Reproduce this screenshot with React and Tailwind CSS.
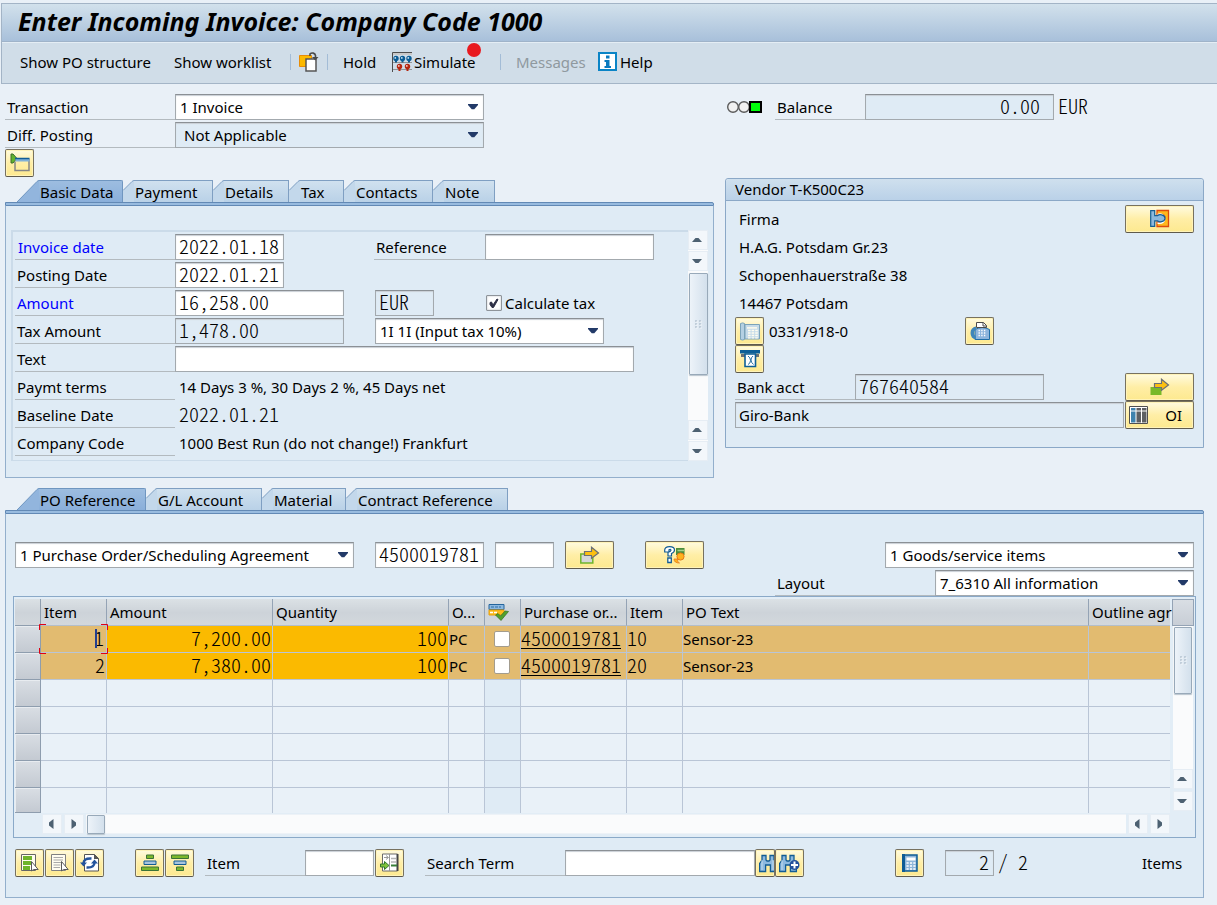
import React from "react";

const MONO = "font-['Noto_Sans_CJK_JP','Liberation_Mono',monospace] font-light text-[20px] [font-feature-settings:'hwid']";
const BOX =
  "h-[26px] rounded-none border border-[#a3a9ae] border-t-[#8b9095] shadow-[inset_0_1px_1px_#c9cfd5] outline-none";
const LABEL = "flex h-[26px] shrink-0 items-center border-b border-[#b3babf] whitespace-nowrap";

function Label({ htmlFor, className = "", children }) {
  return (
    <label htmlFor={htmlFor} className={`${LABEL} ${className}`}>
      {children}
    </label>
  );
}

function Field({ id, label, value = "", readOnly = false, mono = true, className = "" }) {
  return (
    <input
      id={id}
      aria-label={label}
      defaultValue={value}
      readOnly={readOnly}
      className={`${BOX} ${mono ? `pb-[3px] leading-none ${MONO}` : ""} ${readOnly ? "bg-[#dfebf5]" : "bg-white"} ${
        className.includes("pr-") ? "pl-[3px]" : "px-[3px]"
      } ${className}`}
    />
  );
}

function Select({ id, label, value, muted = false, className = "" }) {
  return (
    <div className={`relative shrink-0 ${className}`}>
      <select
        id={id}
        aria-label={label}
        className={`${BOX} block w-full appearance-none pr-6 leading-6 ${muted ? "bg-[#dfebf5] pl-2" : "bg-white pl-1"}`}
      >
        <option>{value}</option>
      </select>
      <svg className="pointer-events-none absolute top-[10px] right-[6px]" width="10" height="6" viewBox="0 0 10 6">
        <path d="M0 0h10v1L6.300 5.300H3.700L0 1z" fill="#223a68" />
      </svg>
    </div>
  );
}

function YellowButton({ label, className = "w-[29px]", align = "justify-center", children }) {
  return (
    <button
      type="button"
      aria-label={label}
      className={`flex h-7 shrink-0 items-center overflow-hidden rounded-[2px] border border-[#77715f] border-b-[#5f5a4c] bg-linear-to-b from-[#fffbe0] via-[#ffeea6] to-[#fde98f] shadow-[inset_0_0_0_1px_#fff3b8] ${align} ${className}`}
    >
      {children}
    </button>
  );
}

function Icon({ children, w = 20, h = 20 }) {
  return (
    <svg width={w} height={h} viewBox={`0 0 ${w} ${h}`} className="shrink-0" aria-hidden="true">
      {children}
    </svg>
  );
}

/* ---------- icons ---------- */

const OtherDocIcon = () => (
  <Icon>
    <path d="M0.500 3.500h12v11h-12z" fill="#fcb900" stroke="#e78c07" />
    <path d="M7 7h10v12H7z" fill="#fff" stroke="#555" strokeWidth="1.500" />
    <path d="M11 4V1.800c2-1.600 5-.8 5.500 1.700V6" fill="none" stroke="#4a4a4a" strokeWidth="1.600" />
    <path d="M13 5h6.500L16.200 8.500z" fill="#4a4a4a" />
  </Icon>
);

const SimulateIcon = () => (
  <Icon w={20} h={20}>
    <path d="M1 0h19v3H1z" fill="#c9c9c9" />
    <path d="M0.500 20V0.500H20" fill="none" stroke="#4d4d4d" />
    {[4, 10.500, 17].map((x) => (
      <g key={x} fill="#0a5c94">
        <circle cx={x} cy="6.500" r="2.700" />
        <path d={`M${x - 1} 8h2v3h-2z`} />
        <circle cx={x - 0.700} cy="5.900" r="0.900" fill="#cfe4f3" />
      </g>
    ))}
    <path d="M1 10.500h19M1 17.500h19" stroke="#777" strokeWidth="0.700" />
    {[7.500, 15.500].map((x) => (
      <g key={x} fill="#b5260f">
        <circle cx={x} cy="14.500" r="2.700" />
        <path d={`M${x - 1} 16h2v3h-2z`} />
        <circle cx={x - 0.700} cy="13.900" r="0.900" fill="#f7d5cd" />
      </g>
    ))}
  </Icon>
);

const InfoIcon = () => (
  <Icon w={19} h={19}>
    <path d="M1 1h17v17H1z" fill="#fff" stroke="#0a84c6" strokeWidth="2" />
    <path d="M8 3.500h3.500v3H8zM6.500 8h5v6H13v2H6.500v-2H8v-4H6.500z" fill="#0a7abf" />
  </Icon>
);

const ExpandIcon = () => (
  <Icon w={20} h={20}>
    <path d="M1 1h2l4 4.500L3 10H1z" fill="#62b32e" stroke="#3d6f2b" />
    <path d="M5 8.500v9h14V6" fill="none" stroke="#868686" strokeWidth="1.500" />
    <path d="M5.500 5.500h14v3h-14z" fill="#7fb0d8" />
    <path d="M5 5.500h14.500" stroke="#125c96" strokeWidth="1.500" />
  </Icon>
);

const LightsIcon = () => (
  <Icon w={36} h={14}>
    <circle cx="7" cy="7" r="5.300" fill="#f1f1f1" stroke="#5a5a5a" strokeWidth="1.400" />
    <circle cx="18" cy="7" r="5.300" fill="#f1f1f1" stroke="#5a5a5a" strokeWidth="1.400" />
    <path d="M24 2h11v10H24z" fill="#00ff0a" stroke="#000" strokeWidth="2" />
  </Icon>
);

const PlugIcon = () => (
  <Icon>
    <path d="M7 1.500h11.500v16H7V13h5c4-1 4-7 0-7.500H7z" fill="#ffb81c" stroke="#dd4a0d" strokeWidth="1.300" />
    <path d="M7.500 5.500c8.500-3 10.500 10.500 0 8.500" fill="none" stroke="#fff" strokeWidth="1.500" />
    <path
      d="M0.700 1.700h4v5h3c1-1.500 7-1.700 7.300 2.600-.3 4.200-6.300 4-7.300 2.500h-3v5.500h-4z"
      fill="#8cb8dc"
      stroke="#155f94"
      strokeWidth="1.200"
    />
  </Icon>
);

const PhoneIcon = () => (
  <Icon w={20} h={19}>
    <path d="M5 2.500h14.500V17H5z" fill="#c6dbe9" stroke="#7ba3b9" />
    <path d="M0.500 1.500Q3 .3 4.500 1.500v16q-2 1-4 0z" fill="#b4d0e2" stroke="#7ba3b9" />
    <path d="M7 5h10v1.800H7z" fill="#f7f7ec" />
    <path d="M8 8.500h10M8 11h10M8 13.500h10M8 15.800h10" stroke="#fffdf0" strokeWidth="1.300" strokeDasharray="2.600 1" />
  </Icon>
);

const FaxIcon = () => (
  <Icon w={20} h={20}>
    <path d="M5 8.500q7-4 14.500 0v10H5z" fill="#8eb5dd" stroke="#1f6ea8" />
    <path d="M6.500 6.500V1.500h7l3 3v2z" fill="#fff" stroke="#4b4b4b" />
    <path d="M13 1.500v3.500h3.500" fill="none" stroke="#4b4b4b" />
    <path d="M6 5.500q-5.500 1-5.500 6.500t5.500 6.500V15q-2-.3-2-3t2-3z" fill="#3f86ba" />
    <path d="M8.500 9.500h7M8.500 12h7M8.500 14.500h7" stroke="#fff" strokeWidth="1.300" strokeDasharray="1.400 1.300" />
  </Icon>
);

const AtmIcon = () => (
  <Icon w={20} h={18}>
    <path d="M0 0h20v3.500H0z" fill="#0d5f97" />
    <path d="M1 4h18v3H1z" fill="#6d7072" />
    <path d="M5 4h10.500v12.500H5z" fill="#fff" stroke="#0d5f97" strokeWidth="1.600" />
    <path d="M8 6q2.500 1.500 2.500 4.500T8 14.500M13 6q-2 1.500-2 4t2.500 4.500" fill="none" stroke="#0d5f97" strokeWidth="0.900" />
  </Icon>
);

const Arrow = () => (
  <path
    d="M4.500 9.500V5.500h7V1.200l7 5.800-7 5.300V9.500z"
    fill="#fdc010"
    stroke="#6b6f76"
    strokeWidth="1.200"
  />
);

const GreenArrowIcon = () => (
  <Icon w={20} h={18}>
    <path d="M0.500 9h11v8h-11z" fill="#79b928" />
    <Arrow />
  </Icon>
);

const CopyArrowIcon = () => (
  <Icon w={20} h={18}>
    <path d="M0.800 8h12v9h-12z" fill="#d5d7d8" stroke="#6fb52c" strokeWidth="1.500" />
    <Arrow />
  </Icon>
);

const ColumnsIcon = () => (
  <Icon w={19} h={19}>
    <path d="M0.500 0.500h18v17h-18z" fill="#fff" stroke="#505050" />
    <path d="M2 2h4.500v14.500H2z" fill="#3e83ae" />
    <path d="M7.500 2h4.500v14.500H7.500zM13 2h4.500v14.500H13z" fill="#5d6063" />
    <path d="M2 5h16" stroke="#fff" />
  </Icon>
);

const HelpMoneyIcon = () => (
  <Icon w={22} h={18}>
    <path d="M12 2h8.500v7H12z" fill="#4b8d3b" />
    <path d="M13.500 4.500H20" stroke="#a6d08b" strokeWidth="1.500" />
    <circle cx="16.500" cy="10.500" r="3.600" fill="#ffb21d" stroke="#e5791a" />
    <path d="M10 13q0 4 5.500 4-2.500-1-2-4z" fill="#ffb21d" stroke="#e5791a" strokeWidth="0.800" />
    <path
      d="M0.700 6V4Q1 .7 5.500.7q5 0 5 3.300 0 2.200-3 3.500V10H4V6.500q3-1 3-2.300-.5-1.500-2-.5V6z"
      fill="#fff"
      stroke="#125c94"
      strokeWidth="1.200"
    />
    <path d="M3.800 12h3.500v4.500H3.800z" fill="#fff" stroke="#125c94" strokeWidth="1.300" />
  </Icon>
);

const FlagCheckIcon = () => (
  <Icon w={21} h={18}>
    <path d="M1 1.500h15v5H1z" fill="#8bb8e0" stroke="#24659c" />
    <path d="M3 4h10" stroke="#2f6fa6" strokeDasharray="3 1" />
    <path d="M1 7h15v5H1z" fill="#fcbc1b" stroke="#e8a00c" />
    <path d="M2 9.500h8" stroke="#fff" strokeWidth="1.300" strokeDasharray="3 1" />
    <path d="M7.500 12l2.500-1.500 2.500 2.500 4.500-5 3.500.5-7.500 9z" fill="#52a12c" stroke="#336f24" strokeWidth="0.700" />
  </Icon>
);

const Cursor = () => (
  <path d="M11.500 8.500v9.500l2-1.500h4.700z" fill="#fff" stroke="#5a5a5a" />
);

const SelectAllIcon = () => (
  <Icon>
    <path d="M1.500 1.500h14v16h-14z" fill="#fffdf0" stroke="#666" />
    <path d="M3 3h9v4H3zM3 8h8v4H3zM3 13h7v4H3z" fill="#6fb52c" />
    <Cursor />
  </Icon>
);

const DeselectIcon = () => (
  <Icon>
    <path d="M1.500 1.500h14v16h-14z" fill="#fffdf0" stroke="#808080" />
    <path d="M3.500 4.500H13M3.500 9.500H11M3.500 14.500H10M3.500 7H13M3.500 12h7" stroke="#a9a9a9" />
    <Cursor />
  </Icon>
);

const RefreshIcon = () => (
  <Icon>
    <path d="M4.500 1.500h10l4 4v12.500h-14z" fill="#fff" stroke="#555" />
    <path d="M14 1l5 5h-5z" fill="#555" />
    <path d="M3.500 10q.5-5 8-4.500" fill="none" stroke="#24549d" strokeWidth="2.400" />
    <path d="M0 9.500h7l-3.500 4z" fill="#24549d" />
    <path d="M14.500 10q-.5 5-8 4.500" fill="none" stroke="#24549d" strokeWidth="2.400" />
    <path d="M11 10.500h7l-3.500-4z" fill="#24549d" />
  </Icon>
);

const SortUpIcon = () => (
  <Icon w={18} h={18}>
    <path d="M5.500 1h7v3.500h-7zM0.500 13h17v3.500H0.500z" fill="#7db82c" stroke="#3b7338" />
    <path d="M3 7h12v3.500H3z" fill="#a7c4dd" stroke="#125c94" />
  </Icon>
);

const SortDownIcon = () => (
  <Icon w={18} h={18}>
    <path d="M0.500 1h17v3.500H0.500zM5.500 13h7v3.500h-7z" fill="#7db82c" stroke="#3b7338" />
    <path d="M3 7h12v3.500H3z" fill="#a7c4dd" stroke="#125c94" />
  </Icon>
);

const PositionIcon = () => (
  <Icon>
    <path d="M2.500 1h15v17h-15z" fill="#fff" stroke="#6b6b6b" />
    <path d="M17.500 1v17" stroke="#444" strokeWidth="2" />
    <path d="M9.500 1v17" stroke="#9a9a9a" />
    <path d="M11 5.500h5M11 9h5" stroke="#b5b5b5" strokeWidth="1.400" />
    <path d="M11 12.500h6" stroke="#39803a" strokeWidth="2" />
    <path d="M4 4.500h4M6 2.500l2.500 2L6 6.500" fill="none" stroke="#9a9a9a" />
    <path d="M0.500 11h4V8.500l4.500 4-4.500 4V14h-4z" fill="#80c43a" stroke="#33772c" />
  </Icon>
);

const Binoculars = () => (
  <path
    d="M0.600 17.500V9.500L3 6V1.500h4V6l1 1h2l1-1V1.500h4V6l2.400 3.500v8h-6V11H6.600v6.500z"
    fill="#8db9df"
    stroke="#125c94"
    strokeWidth="1.300"
  />
);

const FindIcon = () => (
  <Icon w={18} h={19}>
    <Binoculars />
    <path d="M3 6v10M14 6v10" stroke="#c3dbee" />
  </Icon>
);

const FindNextIcon = () => (
  <Icon w={21} h={19}>
    <Binoculars />
    <path d="M3 6v10M14 6v6" stroke="#c3dbee" />
    <circle cx="15.500" cy="11" r="5" fill="#24509b" />
    <path d="M15.500 7.500v7M12 11h7" stroke="#fff" strokeWidth="2" />
  </Icon>
);

const CalcIcon = () => (
  <Icon w={16} h={18}>
    <path d="M1 1h14v16H1z" fill="#8db5d9" stroke="#0f5c95" strokeWidth="1.500" />
    <path d="M1.500 0v18" stroke="#0f5c95" strokeWidth="3" />
    <path d="M4.500 3.500h9v3h-9z" fill="#fff" />
    <path d="M4.500 9h10M4.500 12h10M4.500 15h10" stroke="#fff" strokeWidth="1.600" strokeDasharray="2.200 1.200" />
  </Icon>
);

/* ---------- scroll bars ---------- */

const ARROWS = {
  up: "M2 10h10L8.500 6h-3z",
  down: "M2 6h10L8.500 10h-3z",
  left: "M9.500 3v10L5 9.500v-3z",
  right: "M5.500 3v10L10 9.500v-3z",
};

function ScrollButton({ dir }) {
  return (
    <button
      type="button"
      aria-label={`Scroll ${dir}`}
      className="flex size-5 shrink-0 items-center justify-center border border-[#e6edf4] bg-[#f3f7fb]"
    >
      <svg width="16" height="16" viewBox="0 0 16 16">
        <path d={ARROWS[dir]} fill="#4d6172" />
      </svg>
    </button>
  );
}

function Grip() {
  return (
    <svg width="7" height="9" viewBox="0 0 7 9">
      <path d="M0 1h2M0 4h2M0 7h2M4 1h2M4 4h2M4 7h2" stroke="#9fb0c0" />
      <path d="M1 2h2M1 5h2M1 8h2M5 2h2M5 5h2M5 8h2" stroke="#fff" strokeWidth="0.600" />
    </svg>
  );
}

const THUMB =
  "flex shrink-0 items-center justify-center rounded-[1px] border border-[#98a9b9] bg-linear-to-r from-[#edf3f9] to-[#d3e0ec] shadow-[0_1px_1px_#b9c4ce]";

/* ---------- tabs ---------- */

function Tabs({ items }) {
  return (
    <div role="tablist" className="flex h-[22px] pl-3">
      {items.map(({ label, width }, i) => (
        <button key={label} type="button" role="tab" aria-selected={i === 0} className={`flex h-[22px] shrink-0 ${width}`}>
          {i === 0 ? (
            <svg width="22" height="22" viewBox="0 0 22 22" className="shrink-0">
              <path d="M0 22L20 1.500Q21 .5 22 .5V22z" fill="#92b5dd" />
              <path d="M0 22L20 1.500Q21 .5 22 .5" fill="none" stroke="#6f96c0" />
            </svg>
          ) : (
            <svg width="11" height="22" viewBox="0 0 11 22" className="shrink-0">
              <path d="M0 22V10.500L9 1.500Q10 .5 11 .5V22z" fill="#c3d8eb" />
              <path d="M0 10.500L9 1.500Q10 .5 11 .5" fill="none" stroke="#7f9fc2" />
            </svg>
          )}
          <span
            className={`flex h-[22px] flex-1 items-center border-t border-r whitespace-nowrap ${
              i === 0
                ? "rounded-tr-[2px] border-[#6f96c0] bg-linear-to-b from-[#9dbde0] to-[#8aafda] pl-px"
                : "border-[#7f9fc2] bg-linear-to-b from-[#d0e1ef] to-[#b9d1e7] pl-px"
            }`}
          >
            {label}
          </span>
        </button>
      ))}
    </div>
  );
}

const Band = () => <div className="h-1 rounded-tr-[2px] border border-[#6289b5] bg-[#98bbdf]" />;
const PANEL = "border border-t-0 border-[#93afcc] bg-[#dfebf5]";

const DATA_TABS = [
  { label: "Basic Data", width: "w-[106px]" },
  { label: "Payment", width: "w-[90px]" },
  { label: "Details", width: "w-[76px]" },
  { label: "Tax", width: "w-[55px]" },
  { label: "Contacts", width: "w-[89px]" },
  { label: "Note", width: "w-[62px]" },
];

const ITEM_TABS = [
  { label: "PO Reference", width: "w-[129px]" },
  { label: "G/L Account", width: "w-[116px]" },
  { label: "Material", width: "w-[84px]" },
  { label: "Contract Reference", width: "w-[162px]" },
];

/* ---------- page sections ---------- */

const Separator = () => <div className="h-4 w-px shrink-0 bg-[#a3bcd6]" />;

function Header() {
  return (
    <header className="ml-px border-t border-l border-[#a3b4c6]">
      <div className="flex h-[38px] items-center border-b border-[#9fb3c9] bg-linear-to-b from-[#d2e1ec] to-[#a8c0da] pb-[3px] pl-4">
        <h1 className="text-[25px] leading-none font-bold whitespace-nowrap text-black italic">
          Enter Incoming Invoice: Company Code 1000
        </h1>
      </div>
      <nav className="flex h-[42px] items-center border-t border-b border-t-[#e4edf4] border-b-[#a4b5c7] bg-[#d0dde8] pb-[3px] pl-[18px] whitespace-nowrap">
        <button type="button" className="w-[154px] text-left">Show PO structure</button>
        <button type="button" className="w-[116px] text-left">Show worklist</button>
        <Separator />
        <button type="button" aria-label="Other document" className="w-[36px] pl-2">
          <OtherDocIcon />
        </button>
        <Separator />
        <button type="button" className="w-[64px] pl-[15px] text-left">Hold</button>
        <button type="button" className="relative flex w-[108px] items-center gap-[2px]">
          <SimulateIcon />
          Simulate
          <span className="absolute -top-[9px] left-[75px] size-[14px] rounded-full bg-[#e81a1f]" />
        </button>
        <Separator />
        <button type="button" disabled className="w-[97px] pl-[15px] text-left text-[#8f999f]">Messages</button>
        <button type="button" className="flex items-center gap-[3px]">
          <InfoIcon />
          Help
        </button>
      </nav>
    </header>
  );
}

const Row = ({ children, className = "" }) => <div className={`flex h-[26px] ${className}`}>{children}</div>;
const Output = ({ children }) => <span className="flex items-center pl-1 whitespace-nowrap">{children}</span>;

function BasicData() {
  return (
    <div className={`${PANEL} flex pt-6 pr-[5px] pb-4 pl-[5px]`}>
      <div className="flex min-w-0 flex-1 flex-col gap-[2px] border-t-2 border-b border-l-2 border-[#cbdbe9] pt-[2px] pb-1 pl-[2px]">
        <Row>
          <Label htmlFor="invdate" className="w-[160px] pl-[3px] text-[#0000ff]">Invoice date</Label>
          <Field id="invdate" value="2022.01.18" className="w-[109px]" />
          <Label htmlFor="reference" className="ml-[90px] w-[111px] pl-[2px]">Reference</Label>
          <Field id="reference" className="w-[169px]" />
        </Row>
        <Row>
          <Label htmlFor="postdate" className="w-[160px] pl-[2px]">Posting Date</Label>
          <Field id="postdate" value="2022.01.21" className="w-[109px]" />
        </Row>
        <Row>
          <Label htmlFor="amount" className="w-[160px] pl-[2px] text-[#0000ff]">Amount</Label>
          <Field id="amount" value="16,258.00" className="w-[169px]" />
          <Field label="Currency" value="EUR" readOnly className="ml-[31px] w-[59px]" />
          <label className="ml-[52px] flex items-center gap-[3px] whitespace-nowrap">
            <span className="relative flex">
              <input
                type="checkbox"
                defaultChecked
                className="size-4 appearance-none rounded-[1px] border border-[#8e949a] bg-white shadow-[inset_0_0_2px_#b5bcc3]"
              />
              <svg className="pointer-events-none absolute top-[3px] left-[3px]" width="10" height="11" viewBox="0 0 10 11">
                <path d="M1 4.500v2L3 9.500h1.500L9 1.500 8 1 4 7 2.500 4z" fill="#2c2f45" stroke="#2c2f45" />
              </svg>
            </span>
            Calculate tax
          </label>
        </Row>
        <Row>
          <Label htmlFor="tax" className="w-[160px] pl-[2px]">Tax Amount</Label>
          <Field id="tax" value="1,478.00" readOnly className="w-[169px]" />
          <Select label="Tax code" value="1I 1I (Input tax 10%)" className="ml-[31px] w-[229px]" />
        </Row>
        <Row>
          <Label htmlFor="text" className="w-[160px] pl-[2px]">Text</Label>
          <Field id="text" mono={false} className="w-[459px]" />
        </Row>
        <Row>
          <span className={`${LABEL} w-[160px] pl-[2px]`}>Paymt terms</span>
          <Output>14 Days 3 %, 30 Days 2 %, 45 Days net</Output>
        </Row>
        <Row>
          <span className={`${LABEL} w-[160px] pl-[2px]`}>Baseline Date</span>
          <span className={`flex items-center pb-[3px] pl-1 leading-none ${MONO}`}>2022.01.21</span>
        </Row>
        <Row>
          <span className={`${LABEL} w-[160px] pl-[2px]`}>Company Code</span>
          <Output>1000 Best Run (do not change!) Frankfurt</Output>
        </Row>
      </div>
      <div className="flex w-5 shrink-0 flex-col bg-[#fafbfc]">
        <ScrollButton dir="up" />
        <div className="h-px" />
        <ScrollButton dir="down" />
        <div className={`${THUMB} mt-[2px] ml-px h-[102px]`}>
          <Grip />
        </div>
        <div className="flex-1" />
        <ScrollButton dir="up" />
        <div className="h-px" />
        <ScrollButton dir="down" />
      </div>
    </div>
  );
}

function Vendor() {
  const line = "flex h-7 items-center pl-1";
  return (
    <section className="mt-[58px] rounded-t-[3px] border border-[#8ba8c7] bg-[#dfebf5]">
      <h2 className="flex h-[22px] items-center rounded-t-[3px] border-b border-[#8ba8c7] bg-linear-to-b from-[#cfe0ee] to-[#bad1e8] pb-[2px] pl-[9px]">
        Vendor T-K500C23
      </h2>
      <div className="px-[9px] pt-1 pb-[18px]">
        <div className={`${line} justify-between`}>
          Firma
          <YellowButton label="Vendor services" className="w-[69px]">
            <PlugIcon />
          </YellowButton>
        </div>
        <div className={line}>H.A.G. Potsdam Gr.23</div>
        <div className={line}>Schopenhauerstraße 38</div>
        <div className={line}>14467 Potsdam</div>
        <div className="flex h-7 items-center">
          <YellowButton label="Call vendor">
            <PhoneIcon />
          </YellowButton>
          <span className="w-[201px] pl-[5px]">0331/918-0</span>
          <YellowButton label="Fax vendor">
            <FaxIcon />
          </YellowButton>
        </div>
        <div className="flex h-7">
          <YellowButton label="Payment slip">
            <AtmIcon />
          </YellowButton>
        </div>
        <div className="flex h-7 items-center">
          <Label htmlFor="bank" className="w-[120px] pl-[2px]">Bank acct</Label>
          <Field id="bank" value="767640584" readOnly className="w-[189px]" />
          <YellowButton label="Display vendor" className="ml-auto w-[69px]">
            <GreenArrowIcon />
          </YellowButton>
        </div>
        <div className="flex h-7 items-center gap-px">
          <Field label="Bank name" value="Giro-Bank" readOnly mono={false} className="min-w-0 flex-1" />
          <YellowButton label="Open items" align="justify-between" className="w-[69px] pr-[11px] pl-[3px]">
            <ColumnsIcon />
            OI
          </YellowButton>
        </div>
      </div>
    </section>
  );
}

const ROWS = [
  { item: "1", amount: "7,200.00", qty: "100", unit: "PC", po: "4500019781", poItem: "10", text: "Sensor-23" },
  { item: "2", amount: "7,380.00", qty: "100", unit: "PC", po: "4500019781", poItem: "20", text: "Sensor-23" },
];
const EMPTY_ROWS = ["h-[27px] border-b", "h-[27px] border-b", "h-[27px] border-b", "h-[27px] border-b", "h-[25px]"];

const COLUMNS = ["Item", "Amount", "Quantity", "O...", "", "Purchase or...", "Item", "PO Text", "Outline agr"];

const CELL = "h-[27px] border-r border-b border-[#b9c5d6] p-0 whitespace-nowrap";
const ROW_HEAD =
  "border-r border-b border-[#8e9dae] bg-linear-to-b from-[#d9dee4] to-[#c4cad2] p-0 shadow-[inset_1px_1px_0_#e8ecf0]";
const CELL_INPUT = `block h-[26px] w-full bg-transparent pb-1 text-right leading-none outline-none ${MONO}`;

/* Corner brackets and text caret of the cell being edited. */
function FocusFrame() {
  return (
    <svg className="pointer-events-none absolute -top-[2px] -left-[2px]" width="69" height="30" viewBox="0 0 69 30">
      <path
        d="M0.500 6V0.500H7M62 0.500h6.500V6M0.500 24v5.500H7M62 29.500h6.500V24"
        fill="none"
        stroke="#e00014"
      />
      <path d="M56 5h2v19h-2z" fill="#243f8f" />
    </svg>
  );
}

function ItemTable() {
  return (
    <div className="mx-[7px] border border-[#8aa9c8] bg-[#e2edf6] pt-[2px] pr-px pb-[3px] pl-px">
      <div className="flex gap-[2px]">
        <div className="min-w-0 flex-1">
          <table className="w-full table-fixed border-separate border-spacing-0">
            <colgroup>
              <col className="w-[26px]" />
              <col className="w-[66px]" />
              <col className="w-[166px]" />
              <col className="w-[176px]" />
              <col className="w-[36px]" />
              <col className="w-[36px]" />
              <col className="w-[106px]" />
              <col className="w-[56px]" />
              <col />
              <col className="w-[81px]" />
            </colgroup>
            <thead>
              <tr className="bg-linear-to-b from-[#dbe1e5] via-[#cdd3d9] to-[#d3d8dd]">
                <th className="h-[27px] border-r border-b border-[#8e9dae] p-0" aria-label="Row" />
                {COLUMNS.map((name, i) => (
                  <th
                    key={i}
                    className={`h-[27px] border-b border-[#b3becb] p-0 pl-[3px] text-left font-normal whitespace-nowrap ${
                      i < 8 ? "border-r border-r-[#94a3b5]" : ""
                    }`}
                  >
                    {i === 4 ? <FlagCheckIcon /> : name}
                  </th>
                ))}
              </tr>
            </thead>
            <tbody>
              {ROWS.map((r, i) => (
                <tr key={r.item} className="bg-[#e2bb70]">
                  <td className={`${ROW_HEAD} h-[27px] from-[#c9d1d9] to-[#b6c1cb]`} />
                  <td className={CELL}>
                    <div className="relative">
                      <input
                        aria-label="Item"
                        defaultValue={r.item}
                        className={`${CELL_INPUT} ${i === 0 ? "pr-[2px]" : "pr-px"}`}
                      />
                      {i === 0 && <FocusFrame />}
                    </div>
                  </td>
                  <td className={`${CELL} bg-[#fbba00]`}>
                    <input aria-label="Amount" defaultValue={r.amount} className={`${CELL_INPUT} pr-px`} />
                  </td>
                  <td className={`${CELL} bg-[#fbba00]`}>
                    <input aria-label="Quantity" defaultValue={r.qty} className={`${CELL_INPUT} pr-px`} />
                  </td>
                  <td className={CELL}>{r.unit}</td>
                  <td className={CELL}>
                    <input
                      type="checkbox"
                      aria-label="Booking OK"
                      className="ml-[9px] block size-4 appearance-none rounded-[2px] border border-[#a39c8d] bg-white"
                    />
                  </td>
                  <td className={CELL}>
                    <a href="#po" className={`block h-[20px] w-[100px] border-b border-black leading-[17px] ${MONO}`}>
                      {r.po}
                    </a>
                  </td>
                  <td className={CELL}>
                    <span className={`block h-[20px] leading-[17px] ${MONO}`}>{r.poItem}</span>
                  </td>
                  <td className={CELL}>{r.text}</td>
                  <td className="h-[27px] border-b border-[#b9c5d6] p-0" />
                </tr>
              ))}
              {EMPTY_ROWS.map((size, i) => (
                <tr key={i} className="bg-[#e9f1f8]">
                  <td className={`${ROW_HEAD} ${size}`} />
                  {COLUMNS.map((_, c) => (
                    <td
                      key={c}
                      className={`${size} border-[#b9c5d6] p-0 ${c < 8 ? "border-r" : ""} ${c === 4 ? "bg-[#dfebf5]" : ""}`}
                    />
                  ))}
                </tr>
              ))}
            </tbody>
          </table>
        </div>
        <div className="flex w-[22px] shrink-0 flex-col items-center">
          <button
            type="button"
            aria-label="Configure columns"
            className="h-[27px] w-full border border-[#94a3b5] bg-linear-to-b from-[#d9dee4] to-[#c8ced6]"
          />
          <div className="mb-[2px] flex w-5 flex-1 flex-col bg-[#fafbfc]">
            <div className={`${THUMB} mx-px mt-px h-[67px]`}>
              <Grip />
            </div>
            <div className="flex-1" />
            <ScrollButton dir="up" />
            <div className="h-[2px] bg-[#e2edf6]" />
            <ScrollButton dir="down" />
          </div>
        </div>
      </div>
      <div className="mt-px mr-[24px] ml-[27px] flex h-5 gap-[2px]">
        <ScrollButton dir="left" />
        <ScrollButton dir="right" />
        <div className="flex flex-1 border-y border-[#edf2f7] bg-[#fafbfc]">
          <div className={`${THUMB} ml-px h-[19px] w-[18px]`} />
        </div>
        <ScrollButton dir="left" />
        <ScrollButton dir="right" />
      </div>
    </div>
  );
}

function ItemsPanel() {
  return (
    <section className={`${PANEL} pt-[27px] pb-5`}>
      <div className="flex h-7 items-center px-[9px]">
        <Select label="Reference document category" value="1 Purchase Order/Scheduling Agreement" className="w-[339px]" />
        <Field label="Purchase order" value="4500019781" className="ml-[21px] w-[109px]" />
        <Field label="Purchase order item" className="ml-[11px] w-[59px]" />
        <YellowButton label="Adopt reference" className="ml-[11px] w-[49px]">
          <CopyArrowIcon />
        </YellowButton>
        <YellowButton label="Search purchase orders" className="ml-[31px] w-[59px]">
          <HelpMoneyIcon />
        </YellowButton>
        <Select label="Item category" value="1 Goods/service items" className="ml-auto w-[309px]" />
      </div>
      <div className="mt-px flex h-[26px] justify-end px-[9px]">
        <Label htmlFor="layout" className="w-[160px] pl-[2px]">Layout</Label>
        <Select id="layout" value="7_6310 All information" className="w-[259px]" />
      </div>
      <ItemTable />
      <div className="mt-[11px] flex h-7 items-center px-[9px]">
        <div className="flex gap-px">
          <YellowButton label="Select all"><SelectAllIcon /></YellowButton>
          <YellowButton label="Deselect all"><DeselectIcon /></YellowButton>
          <YellowButton label="Refresh"><RefreshIcon /></YellowButton>
        </div>
        <div className="ml-[31px] flex gap-px">
          <YellowButton label="Sort ascending"><SortUpIcon /></YellowButton>
          <YellowButton label="Sort descending"><SortDownIcon /></YellowButton>
        </div>
        <Label htmlFor="finditem" className="ml-[11px] w-[100px] pl-[2px]">Item</Label>
        <Field id="finditem" className="w-[69px]" />
        <YellowButton label="Position item" className="ml-px w-[29px]"><PositionIcon /></YellowButton>
        <Label htmlFor="term" className="ml-[21px] w-[140px] pl-[2px]">Search Term</Label>
        <Field id="term" mono={false} className="w-[190px]" />
        <YellowButton label="Find" align="justify-start" className="w-5 pl-[3px]"><FindIcon /></YellowButton>
        <YellowButton label="Find next"><FindNextIcon /></YellowButton>
        <div className="ml-auto flex items-center">
          <YellowButton label="Calculate"><CalcIcon /></YellowButton>
          <Field label="Current item" value="2" readOnly className="ml-[21px] w-[49px] pr-1 text-right" />
          <span className={`ml-1 w-[144px] pb-[3px] leading-none whitespace-pre ${MONO}`}>/ 2</span>
          <span className="w-[52px]">Items</span>
        </div>
      </div>
    </section>
  );
}

export default function App() {
  return (
    <div className="min-h-screen bg-[#e9f0f7] pt-[3px] pb-[7px] font-['Noto_Sans',sans-serif] text-[15px] leading-5 text-black">
      <Header />
      <main className="pr-[13px] pl-[5px]">
        <div className="grid grid-cols-[709fr_479fr] gap-[11px] pt-[10px]">
          <div className="min-w-0">
            <div className="flex flex-col gap-[2px]">
              <Row>
                <Label htmlFor="transaction" className="w-[170px] pl-[2px]">Transaction</Label>
                <Select id="transaction" value="1 Invoice" className="w-[309px]" />
              </Row>
              <Row>
                <Label htmlFor="diff" className="w-[170px] pl-[2px]">Diff. Posting</Label>
                <Select id="diff" value="Not Applicable" muted className="w-[309px]" />
              </Row>
            </div>
            <div className="mt-px mb-[3px]">
              <YellowButton label="Show header">
                <ExpandIcon />
              </YellowButton>
            </div>
            <Tabs items={DATA_TABS} />
            <Band />
            <BasicData />
          </div>
          <div className="min-w-0">
            <Row className="items-center pl-px">
              <LightsIcon />
              <Label htmlFor="balance" className="ml-[13px] w-[90px] pl-[2px]">Balance</Label>
              <Field id="balance" value="0.00" readOnly className="w-[189px] pr-[13px] text-right" />
              <span className={`pb-[3px] pl-1 leading-none ${MONO}`}>EUR</span>
            </Row>
            <Vendor />
          </div>
        </div>
        <div className="mt-[10px]">
          <Tabs items={ITEM_TABS} />
          <Band />
          <ItemsPanel />
        </div>
      </main>
    </div>
  );
}
